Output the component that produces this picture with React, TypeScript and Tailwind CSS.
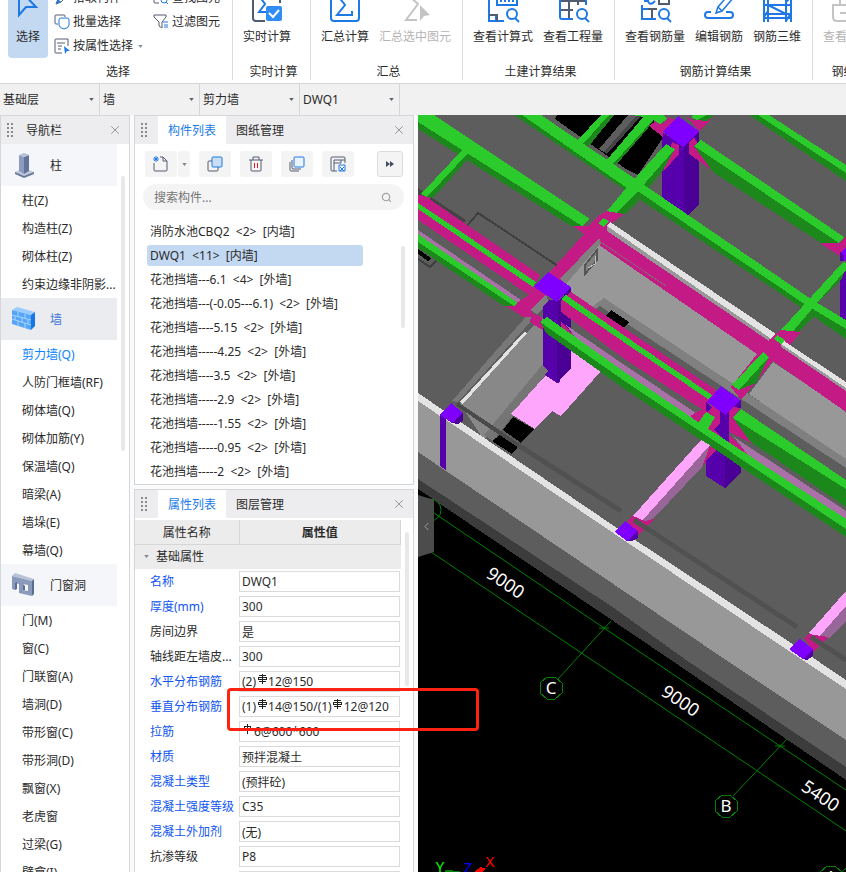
import React from 'react';
import { X, Search, ChevronLeft } from 'lucide-react';

interface Category {
    name: string;
    icon: 'column' | 'wall' | 'opening';
    active?: boolean;
    items: string[];
}

interface Property {
    name: string;
    value: string;
    blue?: boolean;
    // left offsets of the rebar grade symbols inside the value box
    marks?: string[];
    plain?: boolean;
}

const categories: Category[] = [
    { name: '柱', icon: 'column', items: ['柱(Z)', '构造柱(Z)', '砌体柱(Z)', '约束边缘非阴影...'] },
    {
        name: '墙',
        icon: 'wall',
        active: true,
        items: ['剪力墙(Q)', '人防门框墙(RF)', '砌体墙(Q)', '砌体加筋(Y)', '保温墙(Q)', '暗梁(A)', '墙垛(E)', '幕墙(Q)'],
    },
    {
        name: '门窗洞',
        icon: 'opening',
        items: ['门(M)', '窗(C)', '门联窗(A)', '墙洞(D)', '带形窗(C)', '带形洞(D)', '飘窗(X)', '老虎窗', '过梁(G)', '壁龛(I)'],
    },
];

const components = [
    '消防水池CBQ2  <2>  [内墙]',
    'DWQ1  <11>  [内墙]',
    '花池挡墙---6.1  <4>  [外墙]',
    '花池挡墙---(-0.05---6.1)  <2>  [外墙]',
    '花池挡墙----5.15  <2>  [外墙]',
    '花池挡墙-----4.25  <2>  [外墙]',
    '花池挡墙----3.5  <2>  [外墙]',
    '花池挡墙-----2.9  <2>  [外墙]',
    '花池挡墙-----1.55  <2>  [外墙]',
    '花池挡墙-----0.95  <2>  [外墙]',
    '花池挡墙-----2  <2>  [外墙]',
];

const properties: Property[] = [
    { name: '名称', value: 'DWQ1', blue: true },
    { name: '厚度(mm)', value: '300', blue: true },
    { name: '房间边界', value: '是' },
    { name: '轴线距左墙皮...', value: '300' },
    { name: '水平分布钢筋', value: '(2)\u300012@150', blue: true, marks: ['left-[19px]'] },
    { name: '垂直分布钢筋', value: '(1)\u300014@150/(1)\u300012@120', blue: true, marks: ['left-[19px]', 'left-[94px]'] },
    { name: '拉筋', value: '\u30006@600*600', blue: true, marks: ['left-[4px]'], plain: true },
    { name: '材质', value: '预拌混凝土', blue: true },
    { name: '混凝土类型', value: '(预拌砼)', blue: true },
    { name: '混凝土强度等级', value: 'C35', blue: true },
    { name: '混凝土外加剂', value: '(无)', blue: true },
    { name: '抗渗等级', value: 'P8' },
    { name: '泵送类型', value: '(混凝土泵)' },
];

const Caret = ({ className = '' }: { className?: string }) => (
    <svg viewBox="0 0 6 4" className={`w-[5px] h-[3px] fill-[#555d6e] ${className}`}>
        <path d="M0 0h6L3 4z" />
    </svg>
);

const Grip = () => (
    <svg viewBox="0 0 7 16" className="w-[7px] h-4 fill-[#8a8a8a] shrink-0">
        {[0, 4, 8, 12].map((y) => (
            <React.Fragment key={y}>
                <rect x="0" y={y + 1} width="2" height="2" />
                <rect x="4" y={y + 1} width="2" height="2" />
            </React.Fragment>
        ))}
    </svg>
);

const RebarMark = ({ className, plain }: { className: string; plain?: boolean }) => (
    <svg
        viewBox="0 0 10 12"
        shapeRendering="crispEdges"
        className={`absolute top-[2px] w-[10px] h-3 fill-[#222] pointer-events-none ${className}`}
    >
        <path d="M4 1h1v10H4z" />
        {plain ? (
            <path d="M1 3h7v1H1zM1 7h7v1H1zM1 3h1v5H1zM7 3h1v5H7z" />
        ) : (
            <path d="M1 2h7v1H1zM1 8h7v1H1zM0 4h9v1H0zM0 6h9v1H0zM0 4h1v3H0zM8 4h1v3H8z" />
        )}
    </svg>
);

/* ---------- ribbon ---------- */

const blue = '#1e78e6';
const slate = '#525c70';

const icons: Record<string, React.ReactNode> = {
    live: (
        <>
            <path d="M11 0H4Q1 0 1 3v22q0 3 3 3h9" stroke={slate} />
            <path d="M24 0q4 0 4 4v6" stroke={slate} />
            <path d="M8 4l5 7-6 8h7" stroke={blue} />
            <rect x="14" y="13" width="16" height="15" rx="2" fill="#2f8df5" />
            <path d="M17 20l4 4 6-7" stroke="#fff" />
        </>
    ),
    sum: (
        <>
            <rect x="1" y="-3" width="28" height="31" rx="3" stroke={blue} />
            <path d="M21 6V3H8l7 9-8 10h15v-4" stroke={blue} />
        </>
    ),
    sumPick: (
        <>
            <path d="M8 2l10 9L6 27h11" stroke="#c4c4c4" />
            <path d="M20 12l10 10-6 1-4 5z" fill="#c4c4c4" />
        </>
    ),
    formula: (
        <>
            <path d="M1 0v28h15M1 22h7v6M29 0v12H9V0M13 6v3M17 6v3M21 6v3M25 6v3" stroke={blue} />
            <path d="M1 22h8v6" stroke={slate} />
            <circle cx="24" cy="21" r="5" stroke={blue} />
            <path d="M27 25l4 4" stroke={blue} />
        </>
    ),
    table: (
        <>
            <path d="M2 8h26M11 0v26M20 0v12M2 17h13" stroke={slate} />
            <path d="M2 0v24q0 2 2 2h11M28 0v12" stroke={blue} />
            <circle cx="24" cy="21" r="5" stroke={blue} />
            <path d="M27 25l4 4" stroke={blue} />
        </>
    ),
    rebar: (
        <>
            <path d="M19 0v11h10V0M12 17v9M8 16h9" stroke={slate} />
            <path d="M2 12v14h14M2 16h6M4 8h4q1 4 5 2l2-2" stroke={blue} />
            <circle cx="24" cy="21" r="5" stroke={blue} />
            <path d="M27 25l4 4" stroke={blue} />
        </>
    ),
    edit: (
        <>
            <path d="M12 20l2-6L26 0l4 4-12 14zM14 14l4 4" stroke={blue} strokeWidth="1.500" />
            <path d="M7 19H4q-3 0-3 3t3 3h22q3 0 3-3t-3-3h-4" stroke={blue} />
        </>
    ),
    cube: (
        <>
            <path d="M2 0v29M6 0v29M24 0v29M29 0v29M2 12h27M2 21h27M2 25h27M6 12l18 9M2 24l4-6M24 9l5-5M24 28l5-8" stroke={blue} />
        </>
    ),
    view: (
        <>
            <path d="M5 28q-4 0-4-4V12h14M8 12V2h20v26H5M8 20h9" stroke="#c4c4c4" />
        </>
    ),
};

const BigButton = ({ icon, label, muted }: { icon: string; label: string; muted?: boolean }) => (
    <button className={`h-[72px] pb-[13px] flex flex-col items-center justify-end gap-[6px] shrink-0 whitespace-nowrap ${muted ? 'text-[#b4b4b4]' : ''}`}>
        <svg viewBox="0 0 31 30" className="w-[31px] h-[30px] fill-none stroke-2 overflow-visible">{icons[icon]}</svg>
        <span className="h-4 leading-4">{label}</span>
    </button>
);

const RibbonGroup = ({ label, className = '', children }: { label: string; className?: string; children: React.ReactNode }) => (
    <section className={`shrink-0 border-r border-[#dcdcdc] mb-[3px] flex flex-col ${className}`}>
        <div className="flex gap-[10px] pl-[10px] pr-[11px]">{children}</div>
        <div className="mt-[6px] h-4 leading-4 pl-1 text-center whitespace-nowrap">{label}</div>
    </section>
);

const SmallButton = ({ label, children, caret }: { label: string; children: React.ReactNode; caret?: boolean }) => (
    <button className="h-6 flex items-center gap-[3px] whitespace-nowrap">
        <svg viewBox="0 0 16 16" className="w-4 h-4 fill-none">{children}</svg>
        {label}
        {caret && <Caret className="ml-[2px] opacity-70" />}
    </button>
);

const Ribbon = () => (
    <header className="h-[84px] shrink-0 bg-white border-b border-[#d6d6d6] overflow-hidden flex items-end">
        <section className="w-[233px] shrink-0 border-r border-[#dcdcdc] mb-[3px]">
            <div className="flex pl-2">
                <button className="w-10 h-[72px] rounded-sm bg-[#c2d9f1] flex flex-col items-center justify-end gap-[6px] pb-[13px]">
                    <svg viewBox="0 0 28 30" className="w-7 h-[30px] fill-none" stroke={blue} strokeWidth="2">
                        <path d="M5 -8v30l7-8h10L5 -4z" />
                    </svg>
                    <span className="h-4 leading-4">选择</span>
                </button>
                <div className="ml-[6px] w-[99px]">
                    <SmallButton label="拾取构件">
                        <path d="M2 14l2-5 7-7 3 3-7 7z" stroke={slate} />
                        <path d="M2 14l2-5 3 3z" fill={blue} />
                    </SmallButton>
                    <SmallButton label="批量选择">
                        <path d="M4 10H2q-1 0-1-1V2q0-1 1-1h8q1 0 1 1v1" stroke={slate} />
                        <path d="M5 6q0-2 2-2h6q2 0 2 2v5q0 3-5 4-5-1-5-4z" stroke={blue} />
                    </SmallButton>
                    <SmallButton label="按属性选择" caret>
                        <path d="M8 15H2q-1 0-1-1V2q0-1 1-1h12v7M4 5h7M4 8h4M4 11h3M3 5h1" stroke={slate} />
                        <path d="M10 8l6 5-3 0-2 3z" fill={blue} />
                    </SmallButton>
                </div>
                <div>
                    <SmallButton label="查找图元">
                        <path d="M6 13H2q-1 0-1-1V3h12M3 9h3" stroke={slate} />
                        <circle cx="11" cy="10" r="3" stroke={blue} />
                        <path d="M13 12l2 2" stroke={blue} />
                    </SmallButton>
                    <SmallButton label="过滤图元">
                        <path d="M1 1h12v2L9 8v6l-3-2V8L1 3z" stroke={slate} />
                        <path d="M10 8h5M11 11h4M11 13h4" stroke={blue} />
                    </SmallButton>
                </div>
            </div>
            <div className="mt-[6px] h-4 leading-4 pl-1 text-center">选择</div>
        </section>
        <RibbonGroup label="实时计算" className="w-[78px]">
            <BigButton icon="live" label="实时计算" />
        </RibbonGroup>
        <RibbonGroup label="汇总">
            <BigButton icon="sum" label="汇总计算" />
            <BigButton icon="sumPick" label="汇总选中图元" muted />
        </RibbonGroup>
        <RibbonGroup label="土建计算结果">
            <BigButton icon="formula" label="查看计算式" />
            <BigButton icon="table" label="查看工程量" />
        </RibbonGroup>
        <RibbonGroup label="钢筋计算结果">
            <BigButton icon="rebar" label="查看钢筋量" />
            <BigButton icon="edit" label="编辑钢筋" />
            <BigButton icon="cube" label="钢筋三维" />
        </RibbonGroup>
        <RibbonGroup label="钢结果">
            <BigButton icon="view" label="查看结果" muted />
        </RibbonGroup>
    </header>
);

const ContextBar = () => (
    <div className="h-[31px] shrink-0 bg-[#f1f1f1] flex">
        {[
            ['楼层', '基础层'],
            ['类别', '墙'],
            ['构件类型', '剪力墙'],
            ['构件', 'DWQ1'],
        ].map(([label, value]) => (
            <div key={label} className="relative w-[100px] border-r border-[#d6d6d6]">
                <select aria-label={label} className="appearance-none w-full h-full pl-[3px] pt-px bg-transparent outline-none">
                    <option>{value}</option>
                </select>
                <Caret className="absolute right-[5px] top-[14px]" />
            </div>
        ))}
    </div>
);

/* ---------- navigation ---------- */

const CategoryIcon = ({ icon }: { icon: Category['icon'] }) => (
    <svg viewBox="0 0 26 26" className="w-[26px] h-[26px]">
        {icon === 'column' && (
            <>
                <path d="M4 20l9-4 10 4-10 5z" fill="#c0c9dc" />
                <path d="M4 20l9 4v2l-9-4zM23 20l-10 4v2l10-4z" fill="#66779c" />
                <path d="M8 3l5 2v17l-5-3z" fill="#8d9cbc" />
                <path d="M18 3l-5 2v17l5-3z" fill="#62749b" />
                <path d="M8 3l5-2 5 2-5 2z" fill="#b5c0d6" />
            </>
        )}
        {icon === 'wall' && (
            <>
                <path d="M1 4l5-3 18 5-4 3z" fill="#9accff" />
                <path d="M1 4l19 5v15L1 18z" fill="#55a5fa" />
                <path d="M20 9l4-3v14l-4 4z" fill="#1676e8" />
                <path d="M1 9l19 5M1 13l19 6M7 6v5M14 8v5M4 10v4M11 12v5M17 14v4M7 15v5M14 17v5" stroke="#a8d3ff" fill="none" />
            </>
        )}
        {icon === 'opening' && (
            <>
                <path d="M1 4l3-3 19 6-2 2z" fill="#b8c3d8" />
                <path d="M21 9l2-2v15l-2 2z" fill="#5b6d94" />
                <path fillRule="evenodd" d="M1 4l20 5v15l-13-3v-9l-4-1v7l-3-1zM12 12v6l5 1v-6z" fill="#8a9abb" />
                <path d="M4 11l2-1v7l-2 1zM12 12l2 2v4l-2 0z" fill="#5b6d94" />
            </>
        )}
    </svg>
);

const Navigator = () => (
    <aside className="relative w-[130px] shrink-0 bg-white border border-b-0 border-[#d6d6d6] overflow-hidden">
        <div className="h-7 bg-[#ededef] flex items-center pl-[6px] pr-[7px]">
            <Grip />
            <span className="ml-3 grow pt-px">导航栏</span>
            <button aria-label="关闭导航栏" className="text-[#8c8c8c]"><X size={14} strokeWidth={1.5} /></button>
        </div>
        <nav className="w-[116px]">
            {categories.map((category) => (
                <div key={category.name}>
                    <button className={`w-full h-[42px] pl-[10px] flex items-center text-left ${category.active ? 'bg-[#ebecef] text-[#3f77d4]' : 'bg-[#f5f6f9]'}`}>
                        <CategoryIcon icon={category.icon} />
                        <span className="ml-[13px] pt-px">{category.name}</span>
                    </button>
                    {category.items.map((item) => (
                        <a key={item} href="#" className={`flex items-center h-7 pt-[2px] pl-[21px] whitespace-nowrap ${item === '剪力墙(Q)' ? 'text-[#0a84ff]' : ''}`}>
                            {item}
                        </a>
                    ))}
                </div>
            ))}
        </nav>
        <div className="absolute right-1 top-[60px] w-1 h-[275px] rounded-full bg-[#e8e8e8]" />
    </aside>
);

/* ---------- docked panels ---------- */

const PanelTabs = ({ active, other }: { active: string; other: string }) => (
    <div className="h-7 shrink-0 bg-[#ededef] flex items-center pl-[6px] pr-[7px]" role="tablist">
        <Grip />
        <button role="tab" aria-selected="true" className="ml-[10px] h-full px-[10px] pt-[2px] bg-white text-[#1a7be8]">{active}</button>
        <button role="tab" aria-selected="false" className="h-full px-[10px] pt-[2px]">{other}</button>
        <button aria-label="关闭" className="ml-auto text-[#8c8c8c]"><X size={14} strokeWidth={1.5} /></button>
    </div>
);

const toolButton = 'h-[26px] bg-[#f4f4f4] rounded-[3px] flex items-center justify-center';

const ComponentPanel = () => (
    <section className="relative h-[370px] shrink-0 bg-white border border-[#d6d6d6] overflow-hidden">
        <PanelTabs active="构件列表" other="图纸管理" />
        <div className="mt-[7px] pl-[10px] pr-[10px] flex gap-[9px]">
            <div className="flex gap-px">
                <button aria-label="新建" className={`${toolButton} w-8`}>
                    <svg viewBox="0 0 16 16" className="w-4 h-4 fill-none" stroke={slate}>
                        <path d="M1 7v7q0 1 1 1h11q1 0 1-1V5l-4-4H7M10 1v4h4" />
                        <path d="M1 1l4 4M5 1L1 5M3 0v6M0 3h6" stroke={blue} />
                    </svg>
                </button>
                <button aria-label="新建选项" className={`${toolButton} w-3`}><Caret className="opacity-70" /></button>
            </div>
            <button aria-label="复制" className={`${toolButton} w-8`}>
                <svg viewBox="0 0 16 16" className="w-4 h-4 fill-none">
                    <path d="M5 5H2q-1 0-1 1v8q0 1 1 1h8q1 0 1-1v-3" stroke={slate} />
                    <rect x="5" y="1" width="10" height="10" rx="1" fill="#c9dff8" stroke={blue} />
                </svg>
            </button>
            <button aria-label="删除" className={`${toolButton} w-8`}>
                <svg viewBox="0 0 16 16" className="w-4 h-4 fill-none" stroke={slate}>
                    <path d="M1 4h14M3 4v10q0 1 1 1h8q1 0 1-1V4M5 4V1h6v3" />
                    <path d="M6.500 7v5M9.500 7v5" stroke="#e02020" />
                </svg>
            </button>
            <button aria-label="层间复制" className={`${toolButton} w-8`}>
                <svg viewBox="0 0 16 16" className="w-4 h-4 fill-none" stroke={slate}>
                    <path d="M3 4v8q0 1 1 1h8M1 6v8q0 1 1 1h8" />
                    <rect x="5" y="1" width="10" height="10" rx="1" fill="#eaf3fe" stroke={blue} />
                </svg>
            </button>
            <button aria-label="存档" className={`${toolButton} w-8`}>
                <svg viewBox="0 0 16 16" className="w-4 h-4 fill-none" stroke={slate}>
                    <path d="M7 15H2q-1 0-1-1V2q0-1 1-1h12q1 0 1 1v5M4 4v11M4 7h7V4M4 4h11" />
                    <path d="M9 9h6v6H9zM10 11l4 4M14 11l-4 4" stroke={blue} />
                </svg>
            </button>
            <button aria-label="更多" className="ml-auto w-[26px] h-[26px] rounded-[3px] border border-[#dcdcdc] bg-[#f4f4f4] flex items-center justify-center">
                <svg viewBox="0 0 8 6" className="w-2 h-[6px] fill-[#454c5c]"><path d="M0 0l4 3-4 3zM4 0l4 3-4 3z" /></svg>
            </button>
        </div>
        <label className="mt-[7px] ml-2 mr-[9px] h-[26px] rounded-full bg-[#f4f4f4] flex items-center pl-[11px] pr-3">
            <input aria-label="搜索构件" placeholder="搜索构件..." className="grow min-w-0 pt-px bg-transparent outline-none placeholder:text-[#757575]" />
            <Search size={11} strokeWidth={2.5} className="text-[#a0a0a0]" />
        </label>
        <ul className="mt-[9px] pl-3 pr-[50px]">
            {components.map((name, i) => (
                <li key={name} className="h-6 flex items-center">
                    <button className={`w-full h-[21px] pl-[3px] pt-px rounded-[3px] text-left whitespace-pre ${i === 1 ? 'bg-[#c2d9f1]' : ''}`}>
                        {name}
                    </button>
                </li>
            ))}
        </ul>
        <div className="absolute right-2 top-[130px] w-1 h-[82px] rounded-full bg-[#e8e8e8]" />
    </section>
);

const PropertyPanel = () => (
    <section className="relative mt-1 grow min-h-0 bg-white border border-b-0 border-[#d6d6d6] overflow-hidden">
        <PanelTabs active="属性列表" other="图层管理" />
        <table className="mt-[2px] w-[266px] table-fixed border-collapse">
            <thead>
                <tr className="h-[24px] bg-[#ececec]">
                    <th className="w-[104px] p-0 pt-[2px] font-normal border-r border-b border-[#d6d6d6]">属性名称</th>
                    <th className="p-0 pt-[2px] font-semibold border-r border-b border-[#d6d6d6]">属性值</th>
                </tr>
            </thead>
            <tbody>
                <tr className="h-[25px] bg-[#ececec]">
                    <td colSpan={2} className="p-0">
                        <button className="flex items-center pl-[9px] gap-[7px]"><Caret className="opacity-70" />基础属性</button>
                    </td>
                </tr>
                {properties.map((p, i) => (
                    <tr key={p.name} className="h-[25px]">
                        <td className="p-0 pl-[15px] whitespace-nowrap">
                            <label htmlFor={`prop-${i}`} className={p.blue ? 'text-[#0f55f0]' : ''}>{p.name}</label>
                        </td>
                        <td className="p-0 pr-px">
                            <div className="relative h-[21px]">
                                <input
                                    id={`prop-${i}`}
                                    defaultValue={p.value}
                                    className={`block w-full h-[21px] pl-[2px] border border-[#dadada] outline-none whitespace-pre ${p.marks ? 'pb-[2px]' : ''}`}
                                />
                                {p.marks?.map((left) => <RebarMark key={left} className={left} plain={p.plain} />)}
                            </div>
                        </td>
                    </tr>
                ))}
            </tbody>
        </table>
        <div className="absolute right-1 top-[42px] w-1 h-[154px] rounded-full bg-[#e8e8e8]" />
    </section>
);

/* ---------- 3D model ---------- */

const GREEN = '#2acb2a';
const DKGREEN = '#1c881c';
const MAGENTA = '#c41a86';
const VIOLET = '#7f00ff';
const SIDE = '#5600ac';
const SIDE2 = '#4a0094';
const WHITE = '#e3e3e3';
const LIGHT = '#989898';
const MID = '#808080';
const FLOOR = '#5d5d5d';
const LILAC = '#aa70a8';
const PINK = '#fda6fb';
const MAUVE = '#996699';

// painted back to front
const faces: [string, string][] = [
    // openings at the top
    ['#000', '557,115 650,115 664,136 638,175 626,169 555,119'],
    [FLOOR, '628,115 640,115 607,154 599,149'],
    ['#444', '637,115 642,115 607,154 604,152'],
    [GREEN, '601,115 609,115 583,144 577,141'],
    [DKGREEN, '609,115 614,115 589,146 583,144'],
    [DKGREEN, '655,118 648,128 616,165 610,163'],
    [GREEN, '645,115 655,118 613,164 606,161'],
    // far left slab details
    ['#444', '431,197 466,220 462,224 428,203'],
    ['#000', '428,201 459,221 457,224 428,205'],
    ['#444', '418,188 424,192 422,197 418,195'],
    ['#000', '418,249 431,258 428,261 418,254'],
    // basin room
    [LIGHT, '599,242 604,249 604,298 589,309 561,290'],
    [MID, '599,237 599,245 566,284 560,279'],
    [LIGHT, '604,246 759,354 761,358 732,385 604,298'],
    [LIGHT, '773,362 846,411 846,460 749,394'],
    [MID, '604,298 846,459 846,468 600,306 592,311 589,309'],
    ['#000', '611,310 629,322 622,330 606,316'],
    // small room on the left
    ['#888', '543,318 543,366 484,440 460,404 527,332'],
    ['#757575', '549,370 493,441 484,435 543,364'],
    ['#787878', '530,312 534,318 458,402 452,401'],
    [WHITE, '524,332 527,333 463,404 460,402'],
    [PINK, '571,340 601,371 561,416 552,411 535,429 511,414 546,375'],
    ['#000', '513,417 534,429 521,443 503,430'],
    ['#000', '500,435 518,447 512,454 492,441'],
    // green beams of the upper slab
    [GREEN, '418,115 434,115 590,219 582,226 418,122'],
    [DKGREEN, '418,122 582,226 571,226 418,129'],
    [DKGREEN, '466,153 470,157 434,197 427,197'],
    [GREEN, '464,148 470,151 427,197 421,194'],
    [GREEN, '758,115 769,115 846,165 846,173'],
    [DKGREEN, '749,115 758,115 846,173 846,181'],
    // first column
    [SIDE, '662,132 684,146 684,212 662,199'],
    [SIDE2, '684,146 699,132 699,204 688,215 684,212'],
    [MAGENTA, '649,126 656,121 664,124 668,117 675,120 663,132 663,137'],
    [MAGENTA, '687,117 693,120 711,119 699,131'],
    [MAGENTA, '672,142 679,145 679,154 663,172'],
    [MAGENTA, '689,142 694,137 713,171 689,154'],
    [GREEN, '632,115 663,115 667,119 660,124 650,118'],
    [GREEN, '691,117 697,120 707,115 693,115'],
    [DKGREEN, '697,120 707,121 714,115 707,115'],
    [VIOLET, '678,116 699,131 683,147 663,132'],
    [GREEN, '701,140 844,237 839,243 694,146'],
    [DKGREEN, '694,146 839,243 821,243 713,172'],
    [MAGENTA, '820,243 839,243 846,236 846,260'],
    [VIOLET, '840,254 846,247 846,262'],
    [SIDE, '840,252 844,256 844,261 840,261'],
    [SIDE, '840,280 846,270 846,321 840,317'],
    [DKGREEN, '639,190 675,149 663,170 639,200'],
    [DKGREEN, '639,190 639,200 627,213 614,216'],
    [DKGREEN, '522,115 630,188 639,192 803,302 846,328 846,339 799,306 639,199 622,188 514,115'],
    [GREEN, '541,115 634,178 811,299 846,320 846,329 803,303 639,192 627,188 522,115'],
    [GREEN, '666,144 675,149 639,190 614,216 607,211 627,187'],
    [DKGREEN, '846,268 842,278 817,303 811,300'],
    [DKGREEN, '813,309 813,317 799,332 789,335'],
    [GREEN, '843,262 846,263 846,270 816,304 790,335 781,330'],
    // magenta beams along the basin wall
    [MAGENTA, '599,230 607,226 770,338 781,330 801,332 790,345 846,384 846,412 773,361 741,400 731,387 757,354 599,245'],
    [MAGENTA, '573,226 588,226 600,215 606,211 624,214 611,224 607,232 599,240 562,282 545,295 529,295 548,274 584,234'],
    [GREEN, '603,218 609,221 604,227 598,223'],
    [WHITE, '610,222 776,334 770,339 607,226'],
    [LIGHT, '607,226 770,338 769,341 607,231'],
    [GREEN, '777,335 785,340 781,344 774,339'],
    [WHITE, '784,341 846,382 846,389 781,344'],
    [LIGHT, '781,344 846,388 846,391 781,347'],
    [DKGREEN, '769,357 756,383 739,390'],
    [GREEN, '763,352 769,357 739,390 732,385'],
    [MID, '599,238 601,243 566,284 560,279'],
    // long beams from the left edge
    [MAGENTA, '418,195 425,196 540,275 529,295 418,220'],
    [GREEN, '418,203 536,282 533,287 418,209'],
    [LILAC, '418,230 524,302 519,305 418,235'],
    [MAGENTA, '504,305 518,302 529,295 534,287 547,295 532,310 532,313 541,317 547,333 530,322 531,317 524,317'],
    [GREEN, '418,234 518,303 514,306 418,243'],
    [DKGREEN, '418,242 514,306 504,306 418,248'],
    [MID, '530,310 546,295 549,302 537,314'],
    // second column
    [SIDE, '543,307 549,300 560,300 560,382 557,383 545,375 548,371 543,365'],
    [SIDE2, '558,302 571,287 571,368 557,383'],
    [MAGENTA, '561,300 571,292 716,390 706,412 626,360 561,312'],
    [MAGENTA, '561,322 567,327 577,341 561,330'],
    [LILAC, '566,325 626,366 702,417 690,418 620,371 580,344'],
    [GREEN, '566,295 638,345 712,395 708,399 634,349 561,299'],
    [VIOLET, '548,272 571,287 557,302 534,287'],
    // third column
    [MAGENTA, '690,416 706,407 716,405 726,405 740,408 733,418 751,443 729,432 729,435 749,455 714,440'],
    [MAGENTA, '712,440 718,450 702,467'],
    [SIDE, '716,450 706,460 706,476 725,488 725,450'],
    [SIDE2, '725,448 741,462 741,472 725,488'],
    [SIDE, '720,410 729,410 729,445 720,436 714,430 720,423'],
    [SIDE, '706,402 712,407 708,412 706,411'],
    [SIDE, '741,400 741,408 733,407'],
    [VIOLET, '721,386 740,400 726,415 707,402'],
    [LILAC, '734,437 846,511 846,521 748,455'],
    [GREEN, '741,409 846,480 846,490 733,418'],
    [DKGREEN, '733,418 846,489 846,507 751,442'],
    [GREEN, '706,412 715,417 708,429 698,423'],
    [DKGREEN, '540,321 626,382 846,527 846,537 626,390 546,333'],
    [GREEN, '547,317 626,373 698,422 846,519 846,529 626,382 540,322'],
    // pink beams
    [PINK, '701,440 710,445 641,522 632,517'],
    [MAUVE, '710,445 702,467 653,519 641,522'],
    [PINK, '846,591 846,607 818,638 809,633'],
    [MAUVE, '846,606 846,622 829,638 818,638'],
    // front retaining wall
    [WHITE, '418,393 614,526 794,645 846,680 846,690 789,651 634,547 418,402'],
    [LIGHT, '418,401 634,547 789,651 846,689 846,741 726,660 634,598 418,453'],
    [FLOOR, '418,452 634,598 726,660 846,740 846,768 686,660 614,609 418,480'],
    ['#3c3c3c', '418,479 614,608 686,660 846,767 846,780 671,660 594,608 418,489'],
    [SIDE, '440,415 446,418 446,470 440,466'],
    [SIDE2, '452,423 463,413 463,421 458,424'],
    [VIOLET, '451,403 463,413 452,423 440,415'],
    [MAGENTA, '627,521 633,516 645,521 654,519 638,536'],
    [SIDE, '627,541 638,531 638,538 632,541'],
    [VIOLET, '625,521 638,531 627,541 615,532'],
    [MAGENTA, '804,638 809,634 828,637 813,652'],
    [SIDE, '803,659 813,649 813,656 807,660'],
    [VIOLET, '800,639 813,649 803,659 789,649'],
];

const AxisBubble = ({ x, y, name }: { x: number; y: number; name: string }) => (
    <g>
        <path d={`M${x - 4} ${y - 11}h8l7 6v10l-7 6h-8l-7-6v-10z`} fill="none" stroke="#008000" />
        <text x={x} y={y + 6} textAnchor="middle" fontSize="17" fill="#fff">{name}</text>
    </g>
);

const ModelView = () => (
    <main className="relative grow min-w-0 bg-black overflow-hidden">
        <svg
            viewBox="418 115 428 757"
            preserveAspectRatio="xMinYMin slice"
            className="block w-full h-full font-['Noto_Sans',sans-serif]"
            shapeRendering="crispEdges"
        >
            <path d="M418 115h428v600L418 420z" fill={FLOOR} />
            <path d="M466 227l12-14 80 53M418 259l12 8 6-6" fill="none" stroke="#3f3f3f" strokeWidth="2" />
            {faces.map(([fill, points], i) => (
                <polygon key={i} points={points} fill={fill} />
            ))}
            <path d="M599 241l67 45" stroke="#8d6078" />
            <path d="M585 265l12-15v10l-12 14z" fill="#808080" stroke="#555" strokeWidth="2" />
            <path d="M588 268l7-4v-8" fill="none" stroke="#c0c0c0" />
            <path d="M457 404l61 41" stroke="#4a4a4a" strokeWidth="4" />
            <path d="M518 445l103 66M634 520l163 107M811 637l35 23" stroke="#515151" strokeWidth="5" />

            <g fill="none" stroke="#008000" shapeRendering="auto">
                <path d="M434 513l170 115 176 118 66 44M431 552l152 102 170 114 93 63" />
                <path d="M611 621l-53 58M787 739l-54 57M846 868l-8 7M599 628h10M775 746h10" />
                <circle cx="430" cy="510" r="11" />
            </g>
            <AxisBubble x={551} y={688} name="C" />
            <AxisBubble x={726} y={806} name="B" />
            <AxisBubble x={831} y={877} name="A" />
            <g fill="#fff" fontSize="18" textAnchor="middle">
                <text transform="translate(502 588) rotate(34)">9000</text>
                <text transform="translate(677 706) rotate(34)">9000</text>
                <text transform="translate(817 801) rotate(34)">5400</text>
            </g>
            <g fontSize="15" textAnchor="middle">
                <text x="440" y="872" fill="#00ff00">Y</text>
                <text x="468" y="873" fill="#0000ff">Z</text>
                <text x="490" y="867" fill="#ff0000">X</text>
            </g>
            <path d="M445 871l15 1" stroke="#008000" strokeWidth="2" />
            <path d="M474 872l7-5 5 2-4 3z" fill="#ff0000" />
        </svg>
        <button aria-label="收起面板" className="absolute left-0 top-[380px] w-4 h-[62px] text-[#b0b0b0] flex items-center justify-center">
            <svg viewBox="0 0 16 62" className="absolute inset-0 w-4 h-[62px]"><path d="M0 0l16 5v52L0 62z" fill="#4c4c4c" /></svg>
            <ChevronLeft size={13} strokeWidth={1.5} className="relative" />
        </button>
    </main>
);

export default function App() {
    return (
        <div className="relative h-screen flex flex-col overflow-hidden bg-[#fafbfd] text-xs text-[#2b2b2b] font-['Noto_Sans','Noto_Sans_CJK_SC',sans-serif]">
            <Ribbon />
            <ContextBar />
            <div className="grow min-h-0 flex">
                <Navigator />
                <div className="ml-1 mr-1 w-[280px] shrink-0 flex flex-col">
                    <ComponentPanel />
                    <PropertyPanel />
                </div>
                <ModelView />
            </div>
            {/* callout around the vertical rebar value */}
            <div className="absolute left-[227px] top-[688px] w-[252px] h-[43px] rounded-[4px] border-[3px] border-[#ff2213] pointer-events-none" />
        </div>
    );
}
